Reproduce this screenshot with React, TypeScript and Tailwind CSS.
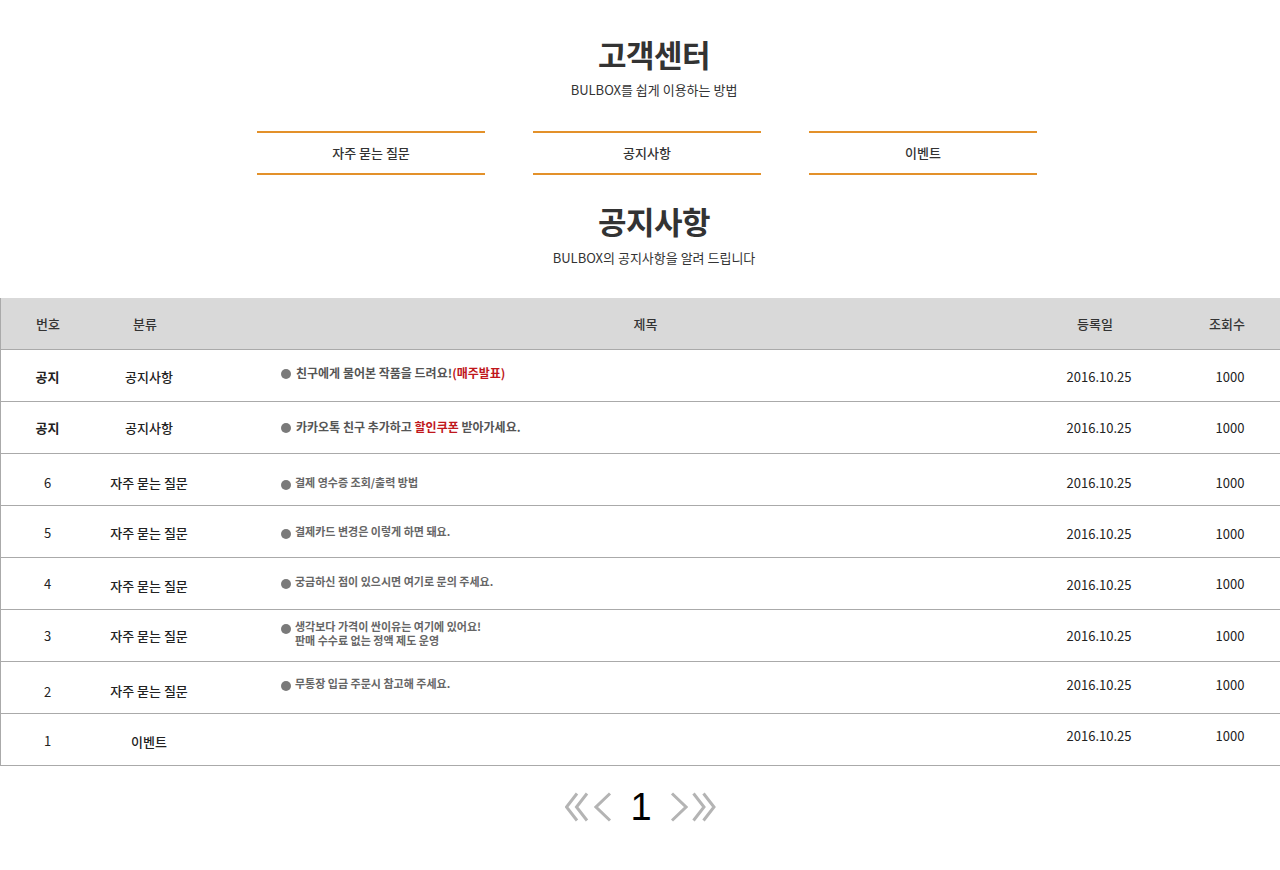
import React from "react";

const FONT = { fontFamily: '"Noto Sans CJK KR", "Noto Sans", sans-serif' };

type Row = {
  num: string;
  cat: string;
  title: React.ReactNode;
  small: boolean;
  pt: [number, number, number, number, number];
};

const rows: Row[] = [
  {
    num: "공지",
    cat: "공지사항",
    title: (
      <>
        친구에게 물어본 작품을 드려요!<span className="text-[#c0171c]">(매주발표)</span>
      </>
    ),
    small: false,
    pt: [18, 18, 15, 18, 18],
  },
  {
    num: "공지",
    cat: "공지사항",
    title: (
      <>
        카카오톡 친구 추가하고 <span className="text-[#c0171c]">할인쿠폰</span> 받아가세요.
      </>
    ),
    small: false,
    pt: [17, 17, 17, 17, 17],
  },
  { num: "6", cat: "자주 묻는 질문", title: "결제 영수증 조회/출력 방법", small: true, pt: [20, 20, 22, 20, 20] },
  { num: "5", cat: "자주 묻는 질문", title: "결제카드 변경은 이렇게 하면 돼요.", small: true, pt: [18, 18, 19, 19, 19] },
  { num: "4", cat: "자주 묻는 질문", title: "궁금하신 점이 있으시면 여기로 문의 주세요.", small: true, pt: [17, 19, 17, 18, 17] },
  {
    num: "3",
    cat: "자주 묻는 질문",
    title: (
      <>
        생각보다 가격이 싼이유는 여기에 있어요!
        <br />
        판매 수수료 없는 정액 제도 운영
      </>
    ),
    small: true,
    pt: [17, 17, 10, 17, 17],
  },
  { num: "2", cat: "자주 묻는 질문", title: "무통장 입금 주문시 참고해 주세요.", small: true, pt: [21, 20, 15, 14, 14] },
  { num: "1", cat: "이벤트", title: "", small: true, pt: [18, 19, 18, 13, 13] },
];

const padClass: Record<number, string> = {
  10: "pt-[10px]",
  13: "pt-[13px]",
  14: "pt-[14px]",
  15: "pt-[15px]",
  17: "pt-[17px]",
  18: "pt-[18px]",
  19: "pt-[19px]",
  20: "pt-[20px]",
  21: "pt-[21px]",
  22: "pt-[22px]",
};

const GRID = "grid grid-cols-[94px_104px_1fr_162px_102px]";

function Chevron({ double, dir }: { double?: boolean; dir: "l" | "r" }) {
  const w = double ? 25 : 18;
  const one = (x: number) =>
    dir === "l" ? `${x + 12},1.5 ${x + 1.5},15 ${x + 12},28.5` : `${x + 1.5},1.5 ${x + 12},15 ${x + 1.5},28.5`;
  const single = dir === "l" ? `16,1.5 2,15 16,28.5` : `2,1.5 16,15 2,28.5`;
  return (
    <svg width={w} height={30} viewBox={`0 0 ${w} 30`} fill="none" stroke="#b4b4b4" strokeWidth={3}>
      {double ? (
        <>
          <polyline points={one(0)} />
          <polyline points={one(10)} />
        </>
      ) : (
        <polyline points={single} />
      )}
    </svg>
  );
}

export default function App() {
  return (
    <div className="w-[1280px] min-h-[870px] bg-white text-[#333]" style={FONT}>
      {/* Header */}
      <div className="flex flex-col items-center pt-[32px] pl-[28px]">
        <h1 className="text-[31px] leading-[44px] font-bold tracking-[-0.5px] text-[#333]">고객센터</h1>
        <p className="mt-[5px] text-[13px] leading-[18px] text-[#333]">BULBOX를 쉽게 이용하는 방법</p>
      </div>

      {/* Tabs */}
      <div className="mt-[32px] flex justify-center gap-[48px] pl-[14px]">
        {["자주 묻는 질문", "공지사항", "이벤트"].map((t) => (
          <div
            key={t}
            className="w-[228px] h-[44px] border-t-2 border-b-2 border-[#e3912a] flex items-center justify-center text-[13px] font-medium text-[#333]"
          >
            {t}
          </div>
        ))}
      </div>

      {/* Section heading */}
      <div className="flex flex-col items-center mt-[24px] pl-[28px]">
        <h2 className="text-[31px] leading-[44px] font-bold tracking-[-0.5px] text-[#333]">공지사항</h2>
        <p className="mt-[6px] text-[13px] leading-[18px] text-[#333]">BULBOX의 공지사항을 알려 드립니다</p>
      </div>

      {/* Table */}
      <div className="mt-[31px] border-l border-[#aaaaaa]">
        <div className={`${GRID} h-[52px] bg-[#d9d9d9] border-b border-[#aaaaaa] text-[13px] text-[#333] font-medium`}>
          <div className="flex items-center justify-center pt-[1px]">번호</div>
          <div className="flex items-center justify-center pt-[1px] pr-[4px]">분류</div>
          <div className="flex items-center justify-center pt-[1px] pl-[76px]">제목</div>
          <div className="flex items-center justify-center pt-[1px] pr-[4px]">등록일</div>
          <div className="flex items-center justify-center pt-[1px] pr-[4px]">조회수</div>
        </div>
        {rows.map((r, i) => (
          <div key={i} className={`${GRID} h-[52px] border-b border-[#aaaaaa] text-[13px] leading-[18px] text-[#222]`}>
            <div className={`text-center pr-[1px] ${padClass[r.pt[0]]} ${i < 2 ? "font-semibold" : ""}`}>{r.num}</div>
            <div className={`text-center pl-[4px] font-medium ${padClass[r.pt[1]]}`}>{r.cat}</div>
            <div className={`pl-[82px] ${padClass[r.pt[2]]}`}>
              {r.title !== "" && (
                <div className="flex items-start">
                  <span className="mt-[4px] w-[10px] h-[10px] rounded-full bg-[#7a7a7a] shrink-0" />
                  <span
                    className={
                      r.small
                        ? "ml-[4px] text-[11px] leading-[14px] font-bold text-[#666] mt-[-1px]"
                        : "ml-[5px] text-[12px] leading-[18px] font-bold text-[#555] mt-[-1px]"
                    }
                  >
                    {r.title}
                  </span>
                </div>
              )}
            </div>
            <div className={`text-center pl-[4px] ${padClass[r.pt[3]]}`}>2016.10.25</div>
            <div className={`text-center pl-[2px] ${padClass[r.pt[4]]}`}>1000</div>
          </div>
        ))}
      </div>

      {/* Pagination */}
      <div className="mt-[26px] flex items-center justify-center gap-[4px] pl-[2px]">
        <Chevron double dir="l" />
        <Chevron dir="l" />
        <span
          className="mx-[14px] text-[38px] leading-[30px] text-black"
          style={{ fontFamily: '"Liberation Sans", sans-serif' }}
        >
          1
        </span>
        <Chevron dir="r" />
        <Chevron double dir="r" />
      </div>
    </div>
  );
}
